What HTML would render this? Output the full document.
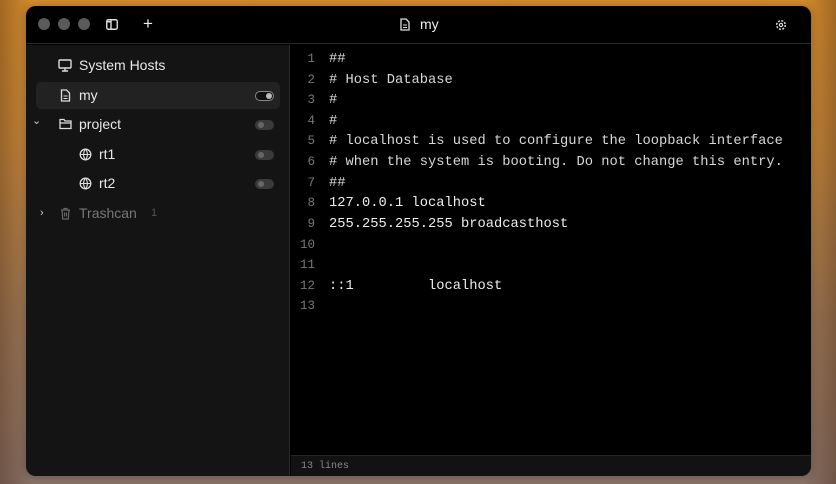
<!DOCTYPE html>
<html><head><meta charset="utf-8"><style>
*{margin:0;padding:0;box-sizing:border-box}
body{width:836px;height:484px;overflow:hidden;position:relative;font-family:"Liberation Sans",sans-serif;
background:linear-gradient(180deg,#d98f2e 0%,#c98a3c 30%,#a07a58 65%,#8a7268 100%);}
.lg{position:absolute;left:0;top:0;width:836px;height:484px;background:linear-gradient(90deg,rgba(60,30,10,.35) 0%,rgba(0,0,0,0) 4%,rgba(0,0,0,0) 96%,rgba(60,30,10,.35) 100%)}
.win{position:absolute;left:26px;top:6px;width:785px;height:470px;border-radius:10px;background:#000;overflow:hidden;box-shadow:0 0 10px rgba(0,0,0,.3)}
.tb{position:absolute;left:0;top:0;width:100%;height:38px;background:#000;border-bottom:1px solid #2a2a2a}
.dot{position:absolute;top:12px;width:12px;height:12px;border-radius:50%;background:#5a5a5a}
.side{position:absolute;left:0;top:39px;width:264px;height:431px;background:#141414;border-right:1px solid #2a2a2a}
.it{position:absolute;left:10px;width:244px;height:27px;color:#e8e8e8;font-size:14px;line-height:27px}
.it svg{position:absolute;top:7px}
.tg{position:absolute;right:6px;top:9px;width:19px;height:10px;border-radius:5px;background:#3a3a3a}
.tg::after{content:"";position:absolute;left:3px;top:2px;width:6px;height:6px;border-radius:50%;background:#666}
.tg.on{background:#111;border:1px solid #888}
.tg.on::after{left:10px;top:1px;background:#bbb}
.ed{position:absolute;left:265px;top:36px;width:520px;height:410px;font-family:"Liberation Mono",monospace;font-size:13.75px;color:#d8d8d8}
.ln{position:absolute;left:0;width:24px;text-align:right;color:#777;font-size:12.5px}
.cd{position:absolute;left:38px;white-space:pre}
.st{position:absolute;left:265px;top:449px;width:520px;height:21px;background:#121212;border-top:1px solid #262626;font-family:"Liberation Mono",monospace;font-size:10px;color:#888;padding:5px 0 0 10px}
</style></head><body><div class="lg"></div>
<div class="win">
<div class="tb">
<div class="dot" style="left:12px"></div><div class="dot" style="left:32px"></div><div class="dot" style="left:52px"></div>
<svg style="position:absolute;left:80px;top:13px" width="12" height="11" viewBox="0 0 12 11"><rect x="0.75" y="0.75" width="10.5" height="9.5" rx="1.5" fill="none" stroke="#ddd" stroke-width="1.4"/><line x1="5" y1="1" x2="5" y2="10" stroke="#ddd" stroke-width="1.4"/><rect x="1.5" y="2" width="3" height="1.5" fill="#ddd"/></svg>
<div style="position:absolute;left:117px;top:8px;color:#eee;font-size:17px">+</div>
<svg style="position:absolute;left:374px;top:12px" width="10" height="13" viewBox="0 0 10 13"><path d="M1 1h5l3 3v8H1z" fill="none" stroke="#ddd" stroke-width="1.3"/><path d="M3 7h4M3 9.5h4" stroke="#ddd" stroke-width="1.1"/></svg>
<div style="position:absolute;left:394px;top:10px;color:#eee;font-size:14px">my</div>
<svg style="position:absolute;left:749px;top:13px" width="12" height="12" viewBox="0 0 12 12"><circle cx="6" cy="6" r="4.3" fill="none" stroke="#ddd" stroke-width="1.5" stroke-dasharray="2 1.4"/><circle cx="6" cy="6" r="1.6" fill="none" stroke="#ddd" stroke-width="1.2"/></svg>
</div>
<div class="side">
<div class="it" style="top:7px"><svg style="left:22px" width="14" height="13" viewBox="0 0 14 13"><rect x="1" y="1" width="12" height="8" rx="1" fill="none" stroke="#ddd" stroke-width="1.4"/><path d="M7 9v3M4 12h6" stroke="#ddd" stroke-width="1.4"/></svg><span style="position:absolute;left:43px">System Hosts</span></div>
<div class="it" style="top:37px;background:#222;border-radius:5px"><svg style="left:24px" width="11" height="13" viewBox="0 0 10 13"><path d="M1 1h5l3 3v8H1z" fill="none" stroke="#ddd" stroke-width="1.3"/><path d="M3 7h4M3 9.5h4" stroke="#ddd" stroke-width="1.1"/></svg><span style="position:absolute;left:43px">my</span><div class="tg on"></div></div>
<div class="it" style="top:66px"><span style="position:absolute;left:-4px;top:-3px;font-size:11px;color:#ccc">⌄</span><svg style="left:23px" width="13" height="12" viewBox="0 0 13 12"><path d="M1 1.5h4l1 1.5h6v7.5H1z M1 5h11" fill="none" stroke="#ddd" stroke-width="1.3"/></svg><span style="position:absolute;left:43px">project</span><div class="tg"></div></div>
<div class="it" style="top:96px"><svg style="left:43px" width="13" height="13" viewBox="0 0 13 13"><circle cx="6.5" cy="6.5" r="5.3" fill="none" stroke="#ddd" stroke-width="1.3"/><path d="M1.5 6.5h10M6.5 1.2c-2.5 3-2.5 7.6 0 10.6M6.5 1.2c2.5 3 2.5 7.6 0 10.6" fill="none" stroke="#ddd" stroke-width="1.1"/></svg><span style="position:absolute;left:63px">rt1</span><div class="tg"></div></div>
<div class="it" style="top:125px"><svg style="left:43px" width="13" height="13" viewBox="0 0 13 13"><circle cx="6.5" cy="6.5" r="5.3" fill="none" stroke="#ddd" stroke-width="1.3"/><path d="M1.5 6.5h10M6.5 1.2c-2.5 3-2.5 7.6 0 10.6M6.5 1.2c2.5 3 2.5 7.6 0 10.6" fill="none" stroke="#ddd" stroke-width="1.1"/></svg><span style="position:absolute;left:63px">rt2</span><div class="tg"></div></div>
<div class="it" style="top:155px;color:#777"><span style="position:absolute;left:4px;top:0;font-size:11px;color:#ccc">›</span><svg style="left:24px" width="11" height="13" viewBox="0 0 11 13"><path d="M1 3h9M4 3V1.5h3V3M2 3l.7 9h5.6L9 3M4.5 5.5v4M6.5 5.5v4" fill="none" stroke="#666" stroke-width="1.2"/></svg><span style="position:absolute;left:43px">Trashcan</span><span style="position:absolute;left:115px;font-size:11px;color:#555">1</span></div>
</div>
<div class="ed">
<div class="ln" style="top:10px">1</div><div class="cd" style="top:10px">##</div>
<div class="ln" style="top:31px">2</div><div class="cd" style="top:31px"># Host Database</div>
<div class="ln" style="top:51px">3</div><div class="cd" style="top:51px">#</div>
<div class="ln" style="top:72px">4</div><div class="cd" style="top:72px">#</div>
<div class="ln" style="top:92px">5</div><div class="cd" style="top:92px"># localhost is used to configure the loopback interface</div>
<div class="ln" style="top:113px">6</div><div class="cd" style="top:113px"># when the system is booting. Do not change this entry.</div>
<div class="ln" style="top:134px">7</div><div class="cd" style="top:134px">##</div>
<div class="ln" style="top:154px">8</div><div class="cd" style="top:154px;color:#eee">127.0.0.1 localhost</div>
<div class="ln" style="top:175px">9</div><div class="cd" style="top:175px;color:#eee">255.255.255.255 broadcasthost</div>
<div class="ln" style="top:196px">10</div>
<div class="ln" style="top:216px">11</div>
<div class="ln" style="top:237px">12</div><div class="cd" style="top:237px;color:#eee">::1         localhost</div>
<div class="ln" style="top:257px">13</div>
</div>
<div class="st">13 lines</div>
</div>
</body></html>
